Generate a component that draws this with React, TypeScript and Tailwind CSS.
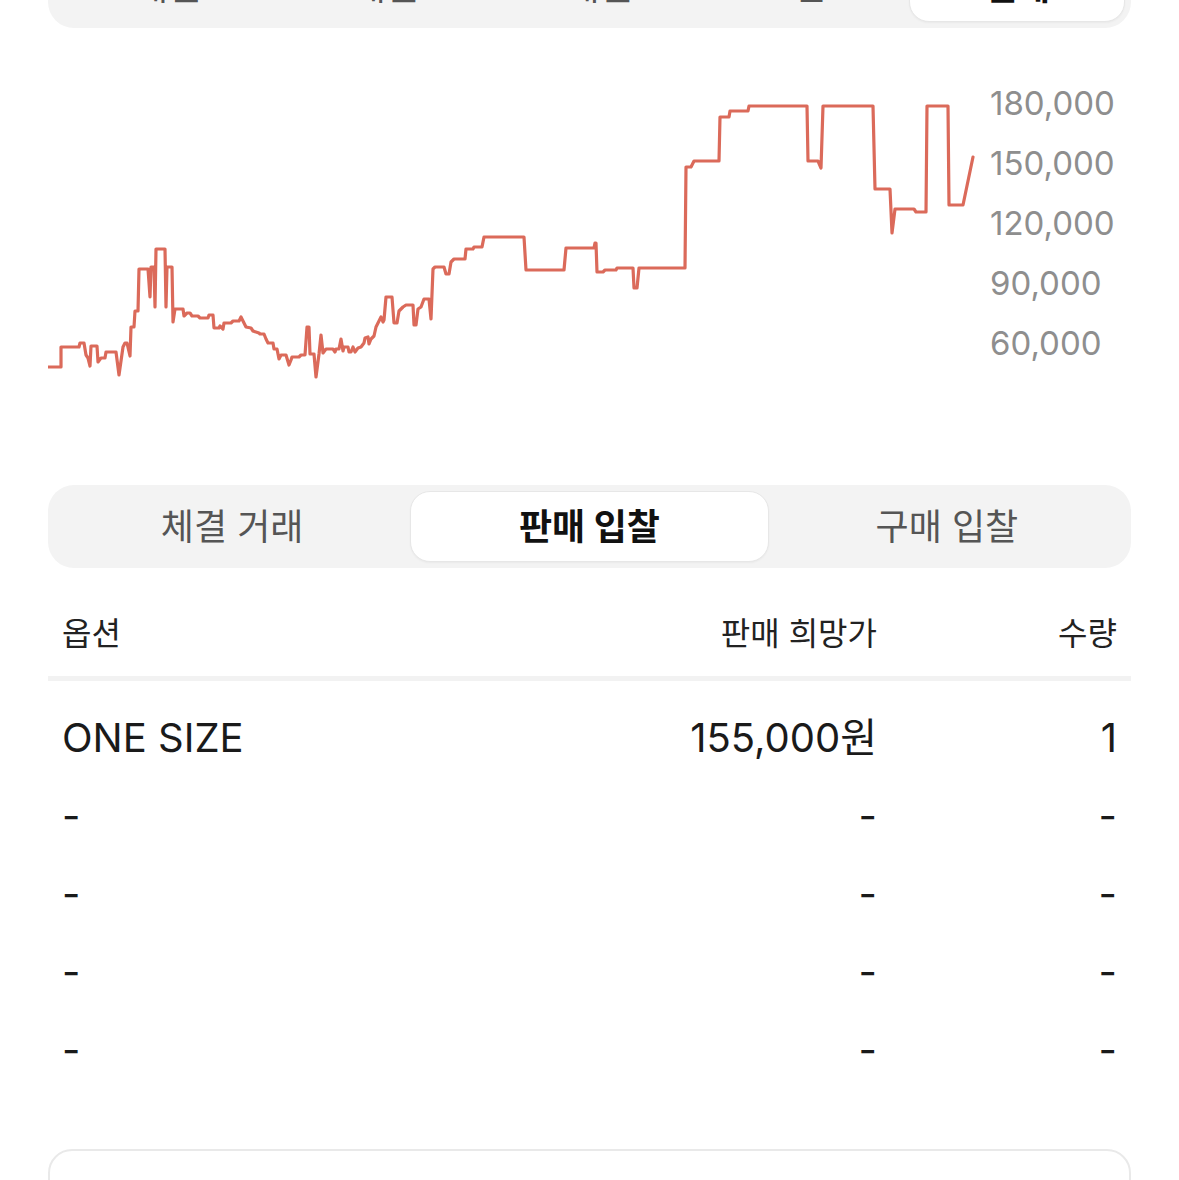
import React from 'react';

const periods = ['1개월', '3개월', '6개월', '1년', '전체'];
const tradeTabs = ['체결 거래', '판매 입찰', '구매 입찰'];
const axis = ['180,000', '150,000', '120,000', '90,000', '60,000'];

const rows = [
  { option: 'ONE SIZE', price: '155,000원', qty: '1' },
  { option: '-', price: '-', qty: '-' },
  { option: '-', price: '-', qty: '-' },
  { option: '-', price: '-', qty: '-' },
  { option: '-', price: '-', qty: '-' },
];

// price line, drawn in page coordinates
const linePath =
  'M48,367 L61,367 L61,347 L79,347 L80,343 L84,343 L86,355 L88,358 L90,366 L91,346 L97,346 L98,362 L101,358 L105,358 L106,352 L116,352 L119,375 L123,347 L125,343 L127,343 L130,356 L131,327 L134,327 L135,311 L138,311 L139,269 L148,269 L150,297 L151,267 L154,267 L155,307 L156,249 L165,249 L166,307 L167,267 L172,267 L173,322 L175,309 L183,309 L184,316 L187,313 L190,313 L192,316 L198,316 L200,318 L208,318 L209,315 L213,315 L214,328 L219,328 L220,326 L223,329 L224,323 L231,323 L233,321 L239,321 L241,317 L244,323 L246,327 L251,328 L253,331 L259,333 L260,334 L264,334 L266,339 L268,343 L273,343 L274,349 L277,349 L279,359 L281,355 L286,355 L289,365 L291,360 L292,357 L299,357 L301,355 L305,355 L307,327 L309,327 L310,354 L314,354 L316,377 L319,354 L321,335 L323,353 L326,349 L333,349 L335,352 L336,349 L339,349 L341,339 L343,351 L344,347 L348,347 L349,352 L351,352 L353,347 L355,352 L358,348 L361,347 L364,343 L365,338 L368,337 L369,344 L371,339 L374,336 L376,327 L379,321 L381,317 L383,322 L384,320 L386,297 L392,297 L394,323 L397,323 L399,311 L403,307 L406,305 L413,305 L414,325 L416,325 L418,309 L421,307 L424,299 L429,299 L431,319 L433,269 L435,267 L444,267 L446,274 L449,274 L451,262 L454,259 L465,259 L466,249 L473,249 L474,247 L482,247 L484,237 L524,237 L526,270 L564,270 L566,248 L594,248 L595,243 L596,243 L597,272 L603,272 L605,270 L616,270 L617,268 L633,268 L634,288 L637,288 L639,268 L685,268 L686,167 L691,167 L694,161 L719,161 L720,117 L729,117 L730,111 L748,111 L749,106 L807,106 L808,161 L818,161 L821,168 L823,106 L873,106 L875,189 L890,189 L892,233 L895,209 L914,209 L916,212 L926,212 L927,106 L948,106 L949,205 L963,205 L973,157';

const Segmented = ({
  items,
  active,
  className,
}: {
  items: string[];
  active: number;
  className?: string;
}) => (
  <div className={`flex h-[83px] rounded-[26px] bg-[#f3f3f3] p-[6px] ${className ?? ''}`}>
    {items.map((label, i) => (
      <div
        key={label}
        className={
          i === active
            ? 'flex flex-1 items-center justify-center rounded-[20px] border border-[#e7e7e7] bg-white text-[36px] font-bold text-[#111] shadow-[0_1px_2px_rgba(0,0,0,0.04)]'
            : 'flex flex-1 items-center justify-center text-[36px] text-[#555]'
        }
      >
        {label}
      </div>
    ))}
  </div>
);

export default function App() {
  return (
    <div className="min-h-screen overflow-hidden bg-white px-[48px] font-[Inter,'Noto_Sans_CJK_KR',sans-serif]">
      <Segmented items={periods} active={4} className="-mt-[55px]" />

      <div className="flex h-[457px]">
        <svg width="927" height="457" viewBox="48 28 927 457" className="shrink-0">
          <path
            d={linePath}
            fill="none"
            stroke="#db6a5a"
            strokeWidth="3.2"
            strokeLinejoin="round"
            strokeLinecap="round"
          />
        </svg>
        <div className="ml-[15px] flex flex-col pt-[45px]">
          {axis.map((v) => (
            <div key={v} className="h-[60px] text-[33px] leading-[60px] text-[#8e8e8e]">
              {v}
            </div>
          ))}
        </div>
      </div>

      <Segmented items={tradeTabs} active={1} />

      <div className="mt-[36px] flex h-[60px] items-center px-[14px] text-[32px] text-[#222]">
        <div className="flex-1">옵션</div>
        <div className="text-right">판매 희망가</div>
        <div className="w-[240px] text-right">수량</div>
      </div>
      <div className="mt-[12px] h-[5px] bg-[#f2f2f2]" />

      <div className="mt-[18px]">
        {rows.map((r, i) => (
          <div key={i} className="flex h-[78px] items-center px-[14px] text-[40px] text-[#1a1a1a]">
            <div className="flex-1">{r.option}</div>
            <div className="text-right">{r.price}</div>
            <div className="w-[240px] text-right">{r.qty}</div>
          </div>
        ))}
      </div>

      <div className="mt-[60px] h-[200px] rounded-[24px] border-2 border-[#e9e9e9]" />
    </div>
  );
}
